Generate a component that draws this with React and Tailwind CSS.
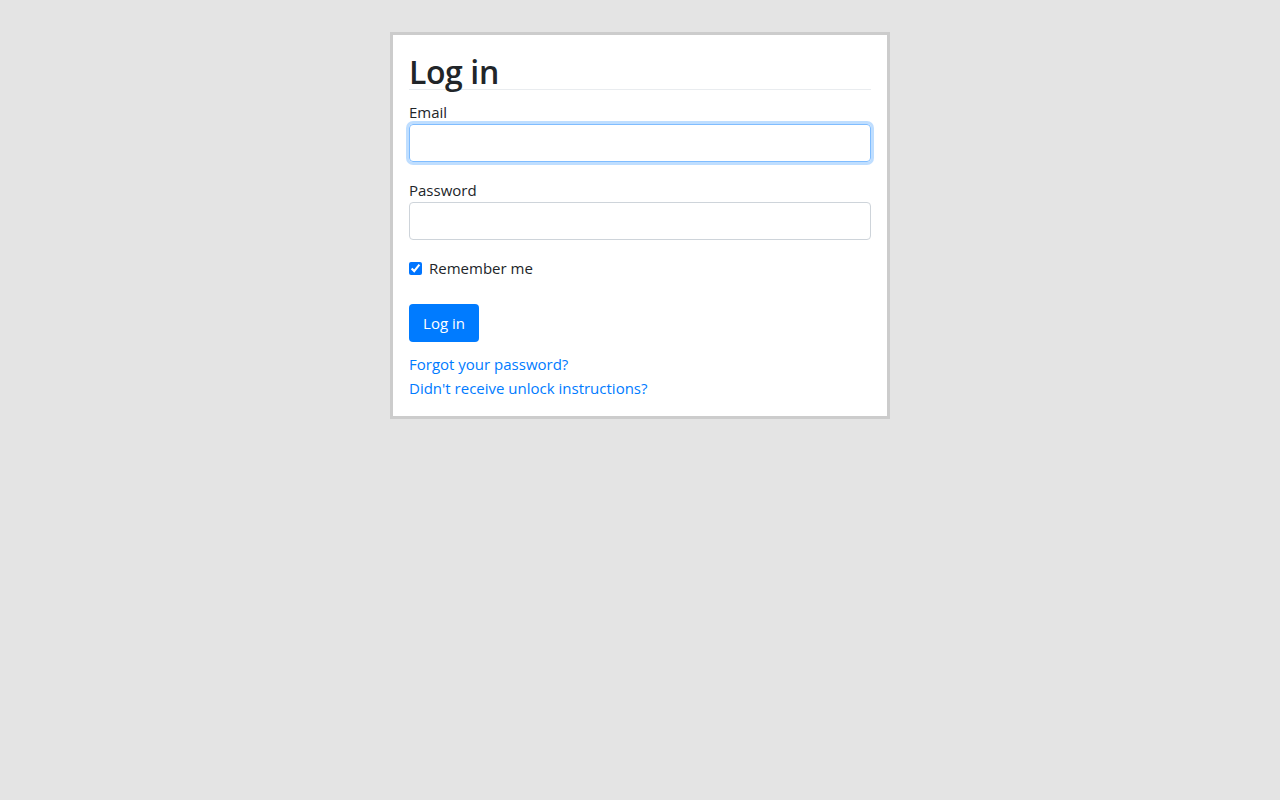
import React, { useState } from "react";

const Login = () => {
  const [remember, setRemember] = useState(true);

  return (
    <div className="min-h-screen bg-[#e4e4e4] pt-8 font-['Open_Sans',sans-serif] text-[#212529]">
      <div className="mx-auto w-[500px] border-[3px] border-[#cccccc] bg-white p-4">
        <h2 className="mb-[10px] border-b border-[#e9ecef] pt-[3px] text-[32px] leading-[35px] font-semibold tracking-[-0.4px]">
          Log in
        </h2>

        {/* Email */}
        <div className="mb-4">
          <label className="block text-[15px] leading-6">Email</label>
          <input
            type="email"
            autoFocus
            className="block h-[38px] w-full rounded border border-[#80bdff] px-3 shadow-[0_0_0_3px_rgba(0,123,255,0.25)] outline-none"
          />
        </div>

        {/* Password */}
        <div className="mb-4">
          <label className="block text-[15px] leading-6">Password</label>
          <input
            type="password"
            className="block h-[38px] w-full rounded border border-[#ced4da] px-3 outline-none"
          />
        </div>

        <div className="mb-6 flex h-6 items-center">
          <input
            type="checkbox"
            checked={remember}
            onChange={() => setRemember(!remember)}
            className="h-[13px] w-[13px] accent-[#0075ff]"
          />
          <span className="ml-[7px] text-[15px]">Remember me</span>
        </div>

        <button className="mb-[10px] h-[38px] w-[70px] rounded bg-[#007bff] text-[15px] text-white">
          Log in
        </button>

        <div className="flex flex-col text-[15px] leading-6 text-[#007bff]">
          <a href="#">Forgot your password?</a>
          <a href="#">Didn't receive unlock instructions?</a>
        </div>
      </div>
    </div>
  );
};

export default Login;
